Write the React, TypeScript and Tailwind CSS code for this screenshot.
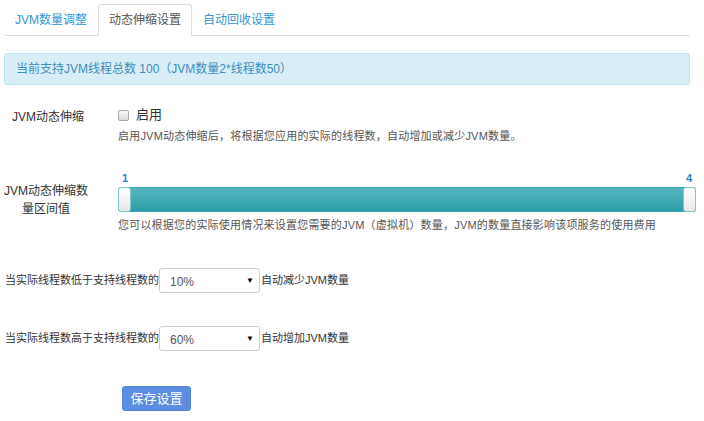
import React from "react";

const font = { fontFamily: '"Liberation Sans", Arial, "Noto Sans CJK SC", sans-serif' };

function Select({ value }: { value: string }) {
  return (
    <div className="w-[101px] h-[25px] border border-[#cccccc] rounded-[3px] bg-white flex items-center justify-between pl-[10px] pr-[5px] text-[12px] text-[#555]">
      <span className="pt-[2px]">{value}</span>
      <span className="text-[8px] text-black">▼</span>
    </div>
  );
}

export default function App() {
  return (
    <div className="w-[704px] h-[421px] bg-white text-[#333] overflow-hidden" style={font}>
      <div className="pl-[4px] pr-[14px] pt-[4px]">
        <div className="flex border-b border-[#dddddd] h-[32px]">
          <div className="px-[11px] flex items-center text-[12px] text-[#2f96d5]">JVM数量调整</div>
          <div className="px-[10px] flex items-center text-[12px] text-[#555] border border-[#dddddd] border-b-white rounded-t-[3px] mb-[-1px] bg-white">动态伸缩设置</div>
          <div className="px-[11px] flex items-center text-[12px] text-[#2f96d5]">自动回收设置</div>
        </div>
        <div className="mt-[17px] h-[32px] rounded-[3px] border border-[#bce8f1] bg-[#d9edf7] flex items-center pl-[11px] text-[12px] text-[#3b8dbd]">
          当前支持JVM线程总数 100（JVM数量2*线程数50）
        </div>
      </div>

      <div className="flex mt-[22px]">
        <div className="w-[118px] text-[12px] text-[#333] pl-[12px] pt-[1px]">JVM动态伸缩</div>
        <div className="flex flex-col">
          <div className="flex items-center gap-[7px] h-[16px] text-[13px]">
            <span className="w-[11px] h-[11px] border border-[#a8a8a8] rounded-[2px] bg-gradient-to-b from-[#fafafa] to-[#dcdcdc]" />
            <span>启用</span>
          </div>
          <div className="mt-[5px] text-[11px] text-[#555] tracking-[0.2px]">启用JVM动态伸缩后，将根据您应用的实际的线程数，自动增加或减少JVM数量。</div>
        </div>
      </div>

      <div className="flex mt-[26px]">
        <div className="w-[118px] text-[12px] text-[#333] text-center leading-[18px] pt-[11px] pr-[26px]">
          JVM动态伸缩数<br />量区间值
        </div>
        <div className="flex flex-col w-[578px]">
          <div className="flex justify-between text-[11px] font-bold text-[#2f7fc4] h-[14px] leading-[14px] px-[4px]">
            <span>1</span>
            <span>4</span>
          </div>
          <div className="relative h-[25px] mt-[2px] rounded-[3px] bg-gradient-to-b from-[#55b6bf] to-[#2a9ea7] border border-[#3aa7b0]">
            <div className="absolute left-[-1px] top-[-1px] w-[13px] h-[25px] rounded-[3px] border border-[#7cc6cc] bg-gradient-to-b from-white to-[#e8e8e8]" />
            <div className="absolute right-[-1px] top-[-1px] w-[13px] h-[25px] rounded-[3px] border border-[#7cc6cc] bg-gradient-to-b from-white to-[#e8e8e8]" />
          </div>
          <div className="mt-[5px] text-[11px] text-[#555] tracking-[0.2px]">您可以根据您的实际使用情况来设置您需要的JVM（虚拟机）数量，JVM的数量直接影响该项服务的使用费用</div>
        </div>
      </div>

      <div className="flex items-center mt-[35px] pl-[5px] text-[11px] text-[#333]">
        <span>当实际线程数低于支持线程数的</span>
        <Select value="10%" />
        <span className="ml-[1px]">自动减少JVM数量</span>
      </div>

      <div className="flex items-center mt-[33px] pl-[5px] text-[11px] text-[#333]">
        <span>当实际线程数高于支持线程数的</span>
        <Select value="60%" />
        <span className="ml-[1px]">自动增加JVM数量</span>
      </div>

      <div className="mt-[35px] pl-[122px]">
        <div className="w-[69px] h-[25px] rounded-[3px] bg-[#5b8de0] border border-[#5486d8] text-white text-[13px] flex items-center justify-center">保存设置</div>
      </div>
    </div>
  );
}
